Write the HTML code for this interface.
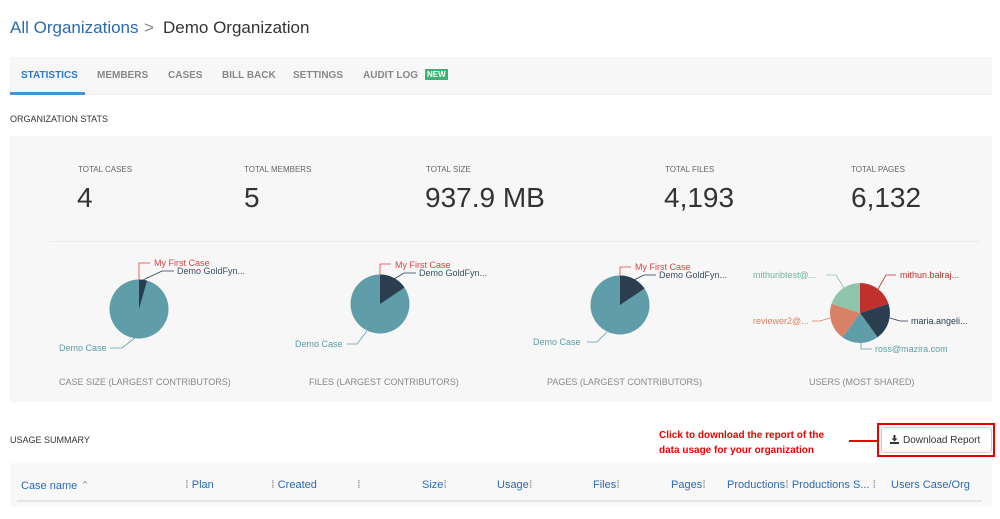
<!DOCTYPE html>
<html><head><meta charset="utf-8"><style>
*{margin:0;padding:0;box-sizing:border-box}
body{width:1000px;height:519px;overflow:hidden;background:#fff;font-family:"Liberation Sans",sans-serif;color:#333;position:relative}
.a{position:absolute;white-space:nowrap}
.tab{position:absolute;top:70px;font-size:10px;font-weight:bold;color:#888}
.lbl{font-size:8px;color:#666}
.big{font-size:28px;color:#333}
.cap{font-size:9px;color:#888}
.th{position:absolute;top:479px;font-size:11px;color:#2a6ab3}
.sep{color:#aaa;font-weight:bold}
</style></head><body>
<div class="a" style="left:10px;top:18px;font-size:17px;color:#2a6ab3">All Organizations</div>
<div class="a" style="left:144px;top:18px;font-size:17px;color:#888">&gt;</div>
<div class="a" style="left:163px;top:18px;font-size:17px;color:#333">Demo Organization</div>

<div class="a" style="left:10px;top:57px;width:982px;height:38px;background:#f7f7f7;border-bottom:1px solid #eee"></div>
<div class="a" style="left:10px;top:92px;width:75px;height:3px;background:#4a90d9"></div>
<div class="tab" style="left:21px;color:#2a7ad0">STATISTICS</div>
<div class="tab" style="left:97px">MEMBERS</div>
<div class="tab" style="left:168px">CASES</div>
<div class="tab" style="left:222px">BILL BACK</div>
<div class="tab" style="left:293px">SETTINGS</div>
<div class="tab" style="left:363px">AUDIT LOG</div>
<div class="a" style="left:425px;top:69px;background:#3cb371;color:#fff;font-size:8px;font-weight:bold;padding:1px 2px">NEW</div>

<div class="a" style="left:10px;top:114px;font-size:9px;color:#333">ORGANIZATION STATS</div>
<div class="a" style="left:10px;top:136px;width:982px;height:266px;background:#f7f7f7"></div>
<div class="a" style="left:50px;top:241px;width:930px;height:1px;background:#ececec"></div>

<div class="a lbl" style="left:78px;top:165px">TOTAL CASES</div><div class="a big" style="left:77px;top:182px">4</div>
<div class="a lbl" style="left:244px;top:165px">TOTAL MEMBERS</div><div class="a big" style="left:244px;top:182px">5</div>
<div class="a lbl" style="left:426px;top:165px">TOTAL SIZE</div><div class="a big" style="left:425px;top:182px">937.9 MB</div>
<div class="a lbl" style="left:665px;top:165px">TOTAL FILES</div><div class="a big" style="left:664px;top:182px">4,193</div>
<div class="a lbl" style="left:851px;top:165px">TOTAL PAGES</div><div class="a big" style="left:851px;top:182px">6,132</div>

<svg class="a" style="left:0;top:0" width="1000" height="519" font-family="Liberation Sans,sans-serif" font-size="9">
<circle cx="139" cy="309" r="29.5" fill="#5f9ea8"/>
<path d="M139 309 L139 279.5 A29.5 29.5 0 0 1 147 280.6 Z" fill="#2b3e4f"/>
<polyline points="139,280 139,263 150,263" fill="none" stroke="#d44" stroke-width="0.8"/>
<text x="154" y="266" fill="#d44">My First Case</text>
<polyline points="143,280 162,271 174,271" fill="none" stroke="#2b3e4f" stroke-width="0.8"/>
<text x="177" y="274" fill="#3b4e5f">Demo GoldFyn...</text>
<polyline points="135,338 122,348 110,348" fill="none" stroke="#5f9ea8" stroke-width="0.8"/>
<text x="59" y="351" fill="#5f9ea8">Demo Case</text>
<circle cx="380" cy="304" r="29.5" fill="#5f9ea8"/>
<path d="M380 304 L380 274.5 A29.5 29.5 0 0 1 404.5 287.5 Z" fill="#2b3e4f"/>
<polyline points="380,275 380,264 391,264" fill="none" stroke="#d44" stroke-width="0.8"/>
<text x="395" y="268" fill="#d44">My First Case</text>
<polyline points="394,279 404,273 416,273" fill="none" stroke="#2b3e4f" stroke-width="0.8"/>
<text x="419" y="276" fill="#3b4e5f">Demo GoldFyn...</text>
<polyline points="367,331 357,344 347,344" fill="none" stroke="#5f9ea8" stroke-width="0.8"/>
<text x="295" y="347" fill="#5f9ea8">Demo Case</text>
<circle cx="620" cy="305" r="29.5" fill="#5f9ea8"/>
<path d="M620 305 L620 275.5 A29.5 29.5 0 0 1 644.5 288.5 Z" fill="#2b3e4f"/>
<polyline points="620,276 620,267 631,267" fill="none" stroke="#d44" stroke-width="0.8"/>
<text x="635" y="270" fill="#d44">My First Case</text>
<polyline points="634,280 644,275 656,275" fill="none" stroke="#2b3e4f" stroke-width="0.8"/>
<text x="659" y="278" fill="#3b4e5f">Demo GoldFyn...</text>
<polyline points="607,332 597,342 587,342" fill="none" stroke="#5f9ea8" stroke-width="0.8"/>
<text x="533" y="345" fill="#5f9ea8">Demo Case</text>
<g transform="translate(860,313)">
<path d="M0 0 L0 -30 A30 30 0 0 1 28.5 -9.3 Z" fill="#c0302c"/>
<path d="M0 0 L28.5 -9.3 A30 30 0 0 1 17.6 24.3 Z" fill="#2b3e4f"/>
<path d="M0 0 L17.6 24.3 A30 30 0 0 1 -17.6 24.3 Z" fill="#5f9ea8"/>
<path d="M0 0 L-17.6 24.3 A30 30 0 0 1 -28.5 -9.3 Z" fill="#d98166"/>
<path d="M0 0 L-28.5 -9.3 A30 30 0 0 1 0 -30 Z" fill="#8fc5ac"/>
</g>
<polyline points="878,289 886,275 896,275" fill="none" stroke="#c0302c" stroke-width="0.8"/>
<text x="900" y="278" fill="#c0302c">mithun.balraj...</text>
<polyline points="890,318 900,321 908,321" fill="none" stroke="#2b3e4f" stroke-width="0.8"/>
<text x="911" y="324" fill="#2b3e4f">maria.angeli...</text>
<polyline points="861,342 861,349 872,349" fill="none" stroke="#5f9ea8" stroke-width="0.8"/>
<text x="875" y="352" fill="#5f9ea8">ross@mazira.com</text>
<polyline points="830,318 820,321 812,321" fill="none" stroke="#d98166" stroke-width="0.8"/>
<text x="753" y="324" fill="#d98166">reviewer2@...</text>
<polyline points="844,288 836,275 826,275" fill="none" stroke="#8fc5ac" stroke-width="0.8"/>
<text x="753" y="278" fill="#6fb59c">mithunbtest@...</text>
</svg>

<div class="a cap" style="left:59px;top:377px">CASE SIZE (LARGEST CONTRIBUTORS)</div>
<div class="a cap" style="left:309px;top:377px">FILES (LARGEST CONTRIBUTORS)</div>
<div class="a cap" style="left:547px;top:377px">PAGES (LARGEST CONTRIBUTORS)</div>
<div class="a cap" style="left:809px;top:377px">USERS (MOST SHARED)</div>

<div class="a" style="left:10px;top:435px;font-size:9px;color:#333">USAGE SUMMARY</div>
<div class="a" style="left:659px;top:428px;font-size:10px;font-weight:bold;color:#e00;line-height:15px">Click to download the report of the<br>data usage for your organization</div>
<div class="a" style="left:849px;top:440px;width:28px;height:2px;background:#e00"></div>
<div class="a" style="left:877px;top:423px;width:118px;height:34px;border:2px solid #e00"></div>
<div class="a" style="left:881px;top:427px;width:111px;height:26px;border:1px solid #ccc;border-radius:3px;background:#fff;font-size:10px;color:#333;padding:7px 0 0 21px">Download Report</div>
<svg class="a" style="left:890px;top:435px" width="9" height="9" viewBox="0 0 9 9"><path d="M3.5 0h2v3.5h2L4.5 6.5 1.5 3.5h2z M0 7h9v2H0z" fill="#333"/></svg>

<div class="a" style="left:10px;top:463px;width:982px;height:44px;background:#f8f8f8;border-radius:3px"></div>
<div class="a" style="left:17px;top:500px;width:965px;height:2px;background:#e6e6e6"></div>
<div class="th" style="left:21px">Case name <span style="color:#999">&#x2303;</span></div>
<div class="th" style="left:185px"><span class="sep">⁞</span> Plan</div>
<div class="th" style="left:271px"><span class="sep">⁞</span> Created</div>
<div class="th" style="left:357px"><span class="sep">⁞</span></div>
<div class="th" style="left:422px">Size<span class="sep">⁞</span></div>
<div class="th" style="left:497px">Usage<span class="sep">⁞</span></div>
<div class="th" style="left:593px">Files<span class="sep">⁞</span></div>
<div class="th" style="left:671px">Pages<span class="sep">⁞</span></div>
<div class="th" style="left:727px">Productions<span class="sep">⁞</span> Productions S... <span class="sep">⁞</span></div>
<div class="th" style="left:891px">Users Case/Org</div>
</body></html>
